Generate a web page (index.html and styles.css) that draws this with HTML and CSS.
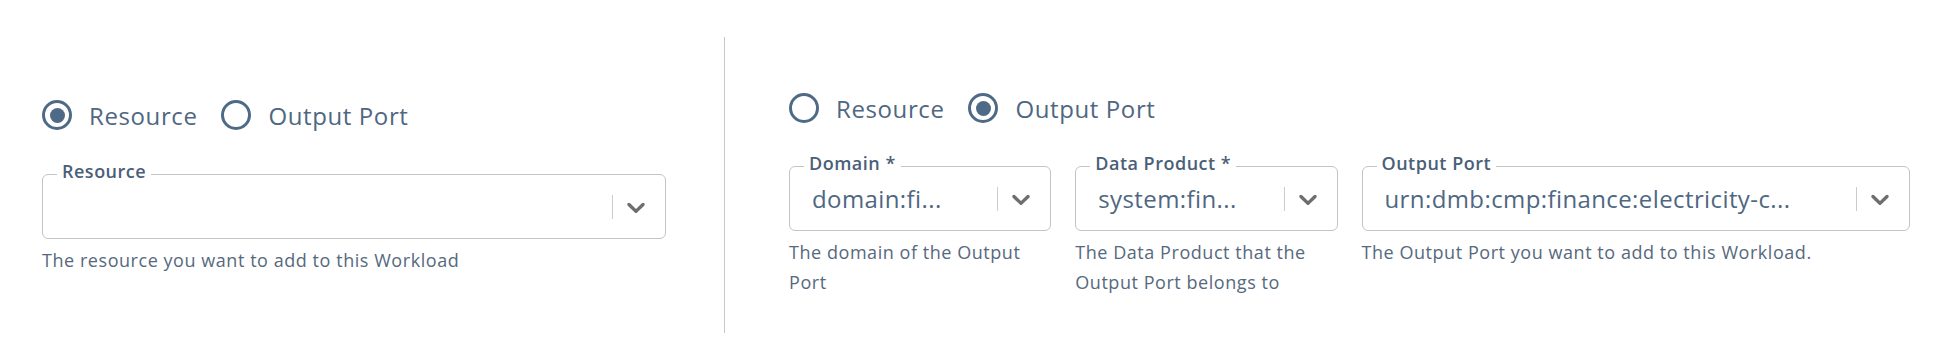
FILE: index.html
```html
<!DOCTYPE html>
<html lang="en">
  <head>
    <meta charset="UTF-8" />
    <meta name="viewport" content="width=device-width, initial-scale=1.0" />
    <title>Add to Workload</title>
    <link rel="stylesheet" href="styles.css">
  </head>
  <body>
    <main class="page">
      <section class="col col_left">
        <div class="radios">
          <label class="radio checked"><span class="dot"></span>Resource</label>
          <label class="radio"><span class="dot"></span>Output Port</label>
        </div>
        <div class="field">
          <div class="select">
            <span class="label">Resource</span>
            <div class="value"></div>
            <span class="sep"></span>
            <svg class="chevron" viewBox="0 0 20 20"><path d="M4.516 7.548c0.436-0.446 1.043-0.481 1.576 0l3.908 3.747 3.908-3.747c0.533-0.481 1.141-0.446 1.574 0 0.436 0.445 0.408 1.197 0 1.615-0.406 0.418-4.695 4.502-4.695 4.502-0.217 0.223-0.502 0.335-0.787 0.335s-0.57-0.112-0.789-0.335c0 0-4.287-4.084-4.695-4.502s-0.436-1.17 0-1.615z"/></svg>
          </div>
          <p class="help">The resource you want to add to this Workload</p>
        </div>
      </section>

      <div class="divider"></div>

      <section class="col col_right">
        <div class="radios">
          <label class="radio"><span class="dot"></span>Resource</label>
          <label class="radio checked"><span class="dot"></span>Output Port</label>
        </div>
        <div class="fields">
          <div class="field">
            <div class="select">
              <span class="label">Domain *</span>
              <div class="value">domain:fi...</div>
              <span class="sep"></span>
              <svg class="chevron" viewBox="0 0 20 20"><path d="M4.516 7.548c0.436-0.446 1.043-0.481 1.576 0l3.908 3.747 3.908-3.747c0.533-0.481 1.141-0.446 1.574 0 0.436 0.445 0.408 1.197 0 1.615-0.406 0.418-4.695 4.502-4.695 4.502-0.217 0.223-0.502 0.335-0.787 0.335s-0.57-0.112-0.789-0.335c0 0-4.287-4.084-4.695-4.502s-0.436-1.17 0-1.615z"/></svg>
            </div>
            <p class="help">The domain of the Output Port</p>
          </div>
          <div class="field">
            <div class="select">
              <span class="label">Data Product *</span>
              <div class="value">system:fin...</div>
              <span class="sep"></span>
              <svg class="chevron" viewBox="0 0 20 20"><path d="M4.516 7.548c0.436-0.446 1.043-0.481 1.576 0l3.908 3.747 3.908-3.747c0.533-0.481 1.141-0.446 1.574 0 0.436 0.445 0.408 1.197 0 1.615-0.406 0.418-4.695 4.502-4.695 4.502-0.217 0.223-0.502 0.335-0.787 0.335s-0.57-0.112-0.789-0.335c0 0-4.287-4.084-4.695-4.502s-0.436-1.17 0-1.615z"/></svg>
            </div>
            <p class="help">The Data Product that the Output Port belongs to</p>
          </div>
          <div class="field">
            <div class="select">
              <span class="label">Output Port</span>
              <div class="value">urn:dmb:cmp:finance:electricity-c...</div>
              <span class="sep"></span>
              <svg class="chevron" viewBox="0 0 20 20"><path d="M4.516 7.548c0.436-0.446 1.043-0.481 1.576 0l3.908 3.747 3.908-3.747c0.533-0.481 1.141-0.446 1.574 0 0.436 0.445 0.408 1.197 0 1.615-0.406 0.418-4.695 4.502-4.695 4.502-0.217 0.223-0.502 0.335-0.787 0.335s-0.57-0.112-0.789-0.335c0 0-4.287-4.084-4.695-4.502s-0.436-1.17 0-1.615z"/></svg>
            </div>
            <p class="help">The Output Port you want to add to this Workload.</p>
          </div>
        </div>
      </section>
    </main>
  </body>
</html>
```

FILE: styles.css
```css
body {
  margin: 0;
  padding: 0;
  background-color: white;
  font-family: "Open Sans", "DejaVu Sans", sans-serif;
  color: #4f6782;
}

.page {
  display: flex;
  padding: 37px 38px 30px 42px;
}

.col_left {
  width: 624px;
  padding-top: 60px;
}

.divider {
  width: 1px;
  height: 296px;
  margin-left: 58px;
  background-color: #c8c8c8;
}

.col_right {
  flex: 1;
  margin-left: 64px;
  padding-top: 53px;
}

/* radio knapper */
.radios {
  display: flex;
  height: 36px;
  align-items: center;
}

.radio {
  display: flex;
  align-items: center;
  gap: 17px;
  margin-right: 24px;
  font-size: 24px;
  letter-spacing: 0.6px;
  color: #4f6782;
}

.dot {
  box-sizing: border-box;
  width: 30px;
  height: 30px;
  border: 3px solid #4f6a86;
  border-radius: 50%;
  display: flex;
  align-items: center;
  justify-content: center;
}

.checked .dot:after {
  content: "";
  width: 15px;
  height: 15px;
  border-radius: 50%;
  background-color: #4f6a86;
}

/* felter */
.fields {
  display: grid;
  grid-template-columns: calc(25% - 18px) calc(25% - 18px) calc(50% - 12px);
  gap: 24px;
}

.field {
  margin-top: 40px;
}

.col_left .field {
  margin-top: 41px;
}

.select {
  position: relative;
  box-sizing: border-box;
  height: 65px;
  border: 1px solid #c4c4c4;
  border-radius: 6px;
  display: flex;
  align-items: center;
}

.label {
  position: absolute;
  top: -13px;
  left: 14px;
  padding: 0 5px;
  background-color: white;
  font-size: 18px;
  line-height: 18px;
  font-weight: 600;
  letter-spacing: 0.5px;
  color: #4a6078;
}

.value {
  flex: 1;
  min-width: 0;
  padding-left: 22px;
  font-size: 24px;
  letter-spacing: 0.4px;
  white-space: nowrap;
  overflow: hidden;
  color: #4f6782;
}

.sep {
  width: 1px;
  height: 24px;
  background-color: #cccccc;
}

.chevron {
  width: 30px;
  height: 30px;
  margin-left: 8px;
  margin-right: 14px;
  fill: #6e6e6e;
}

.help {
  margin: 6px 0 0;
  font-size: 18px;
  line-height: 30px;
  letter-spacing: 0.55px;
  color: #56697d;
}
```
